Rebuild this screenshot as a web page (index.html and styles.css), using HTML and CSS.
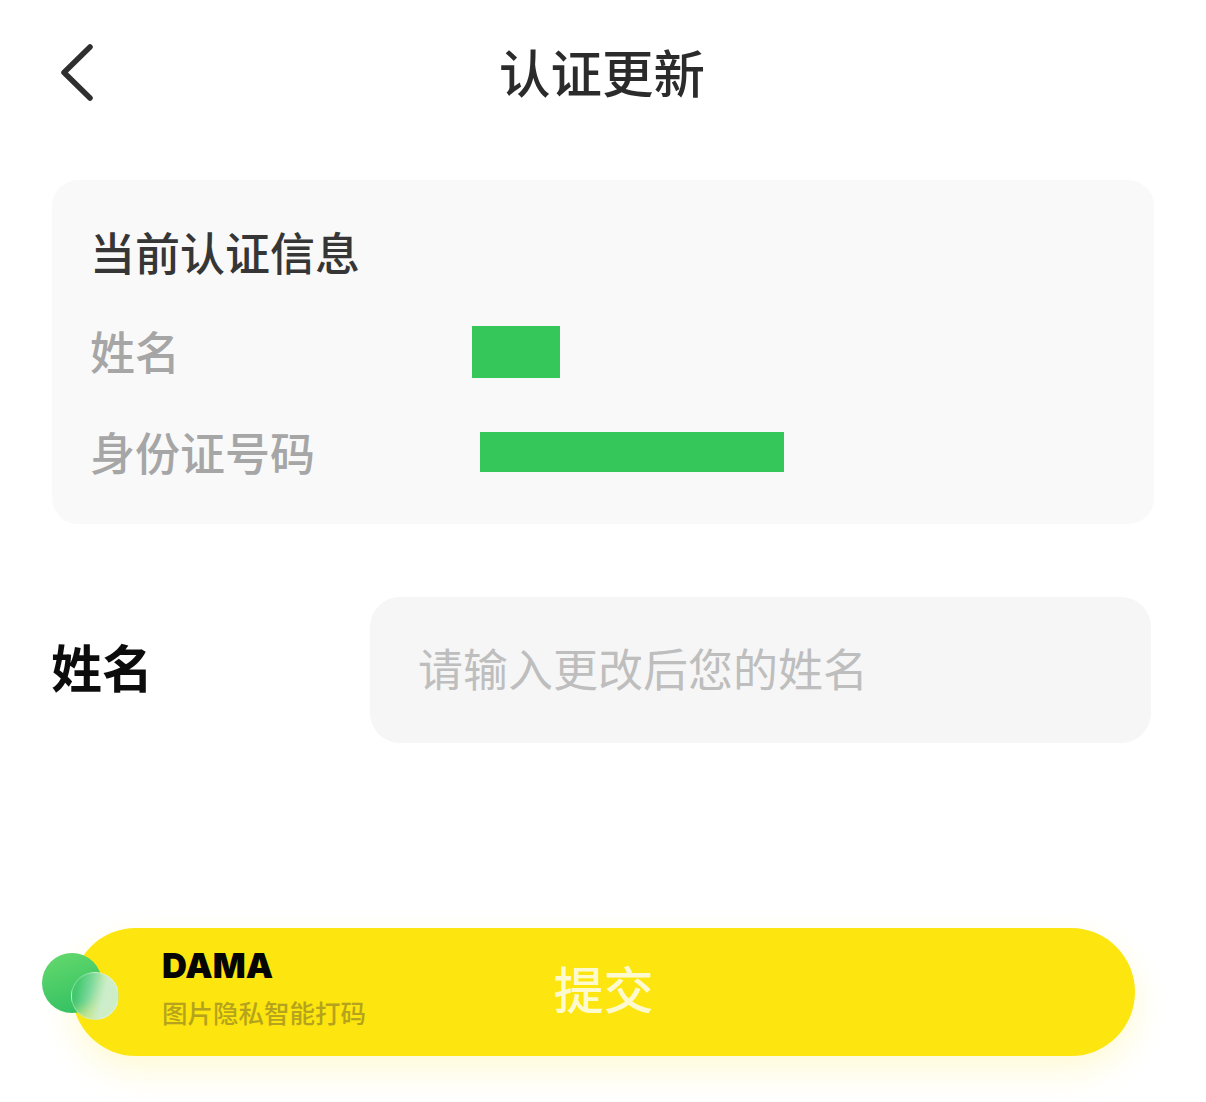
FILE: index.html
```html
<!DOCTYPE html>
<html lang="zh-CN">
<head>
<meta charset="utf-8">
<title>认证更新</title>
<link rel="stylesheet" href="styles.css">
</head>
<body>
<main class="page">
  <header class="topbar">
    <button class="back" aria-label="返回">
      <svg viewBox="0 0 36 60" width="36" height="60"><path d="M30 4 L4 29.5 L30 55" fill="none" stroke="#2f2f2f" stroke-width="5.5" stroke-linecap="round" stroke-linejoin="round"/></svg>
    </button>
    <h1 class="title">认证更新</h1>
  </header>

  <section class="card">
    <h2 class="card-title">当前认证信息</h2>
    <div class="row row-name">
      <span class="row-label">姓名</span>
      <span class="mask mask-name"></span>
    </div>
    <div class="row row-id">
      <span class="row-label">身份证号码</span>
      <span class="mask mask-id"></span>
    </div>
  </section>

  <section class="field">
    <label class="field-label" for="name">姓名</label>
    <input class="field-input" id="name" placeholder="请输入更改后您的姓名">
  </section>

  <div class="submit">
    <span class="logo">
      <span class="dot-big"></span>
      <span class="dot-small"></span>
    </span>
    <div class="brand">
      <strong class="brand-name">DAMA</strong>
      <span class="brand-sub">图片隐私智能打码</span>
    </div>
    <span class="submit-text">提交</span>
    <span></span>
  </div>
</main>
</body>
</html>
```

FILE: styles.css
```css
* { box-sizing: border-box; }
html, body { margin: 0; background: #fff; }
body {
  font-family: "Noto Sans CJK SC", "Liberation Sans", sans-serif;
  width: 1206px;
  height: 1102px;
  overflow: hidden;
}
.page { padding: 0 52px; }
.topbar {
  position: relative;
  height: 148px;
  display: flex;
  align-items: center;
  justify-content: center;
}
.back {
  position: absolute;
  left: 8px;
  top: 43px;
  padding: 0;
  border: 0;
  background: none;
  line-height: 0;
}
.title {
  margin: -6px 0 0 -2px;
  font-size: 51.5px;
  font-weight: 500;
  line-height: 60px;
  color: #2b2b2b;
}
.card {
  margin-top: 32px;
  height: 344px;
  width: 1102px;
  padding: 44px 38px 0;
  background: #f9f9f9;
  border-radius: 26px;
}
.card-title {
  margin: 0;
  font-size: 45px;
  font-weight: 500;
  line-height: 56px;
  color: #363636;
}
.row { display: flex; align-items: center; }
.row-label {
  font-size: 45px;
  font-weight: 500;
  line-height: 52px;
  color: #a6a6a6;
}
.row-name { margin-top: 44px; }
.row-id { margin-top: 48px; height: 52px; }
.row-name .row-label { width: 382px; }
.row-id .row-label { width: 390px; }
.mask { display: block; background: #35c75a; }
.mask-name { width: 88px; height: 52px; margin-top: 2px; }
.mask-id { width: 304px; height: 40px; }
.field {
  margin-top: 73px;
  display: flex;
  align-items: center;
}
.field-label {
  width: 318px;
  padding-bottom: 8px;
  margin-left: -1px;
  font-size: 51px;
  font-weight: 700;
  color: #0c0c0c;
}
.field-input {
  width: 781px;
  height: 146px;
  margin-left: 1px;
  padding: 0 48px 6px;
  border: 0;
  border-radius: 30px;
  background: #f6f6f6;
  font: 400 45px "Noto Sans CJK SC", sans-serif;
  color: #333;
  outline: none;
}
.field-input::placeholder { color: #bebebe; opacity: 1; }
.submit {
  position: relative;
  margin: 185px 0 0 20px;
  width: 1063px;
  height: 128px;
  padding-left: 90px;
  display: grid;
  grid-template-columns: 1fr auto 1fr;
  align-items: center;
  border-radius: 64px;
  background: #fde50f;
  box-shadow: 0 14px 34px rgba(254, 229, 15, 0.18);
}
.logo {
  position: absolute;
  left: -30px;
  top: 25px;
  width: 78px;
  height: 68px;
}
.dot-big {
  position: absolute;
  left: 0;
  top: 0;
  width: 60px;
  height: 60px;
  border-radius: 50%;
  background: linear-gradient(160deg, #66da6c 0%, #2dbd62 100%);
}
.dot-small {
  position: absolute;
  left: 29px;
  top: 19px;
  width: 48px;
  height: 48px;
  border-radius: 50%;
  border: 1px solid rgba(255, 255, 255, 0.3);
  background: linear-gradient(105deg, rgba(70, 200, 125, 0.35) 15%, rgba(200, 238, 222, 0.9) 65%);
  backdrop-filter: blur(6px);
}
.brand { display: flex; flex-direction: column; align-items: flex-start; margin-bottom: 10px; }
.brand-name {
  font-family: "Inter", "Liberation Sans", sans-serif;
  font-size: 34.5px;
  font-weight: 900;
  line-height: 40px;
  color: #050505;
}
.brand-sub {
  margin-top: 10px;
  font-size: 25.5px;
  font-weight: 500;
  line-height: 32px;
  color: #b5a31d;
}
.submit-text {
  margin: 0 0 10px -90px;
  font-size: 50px;
  font-weight: 500;
  line-height: 60px;
  color: #fefad0;
}
```
